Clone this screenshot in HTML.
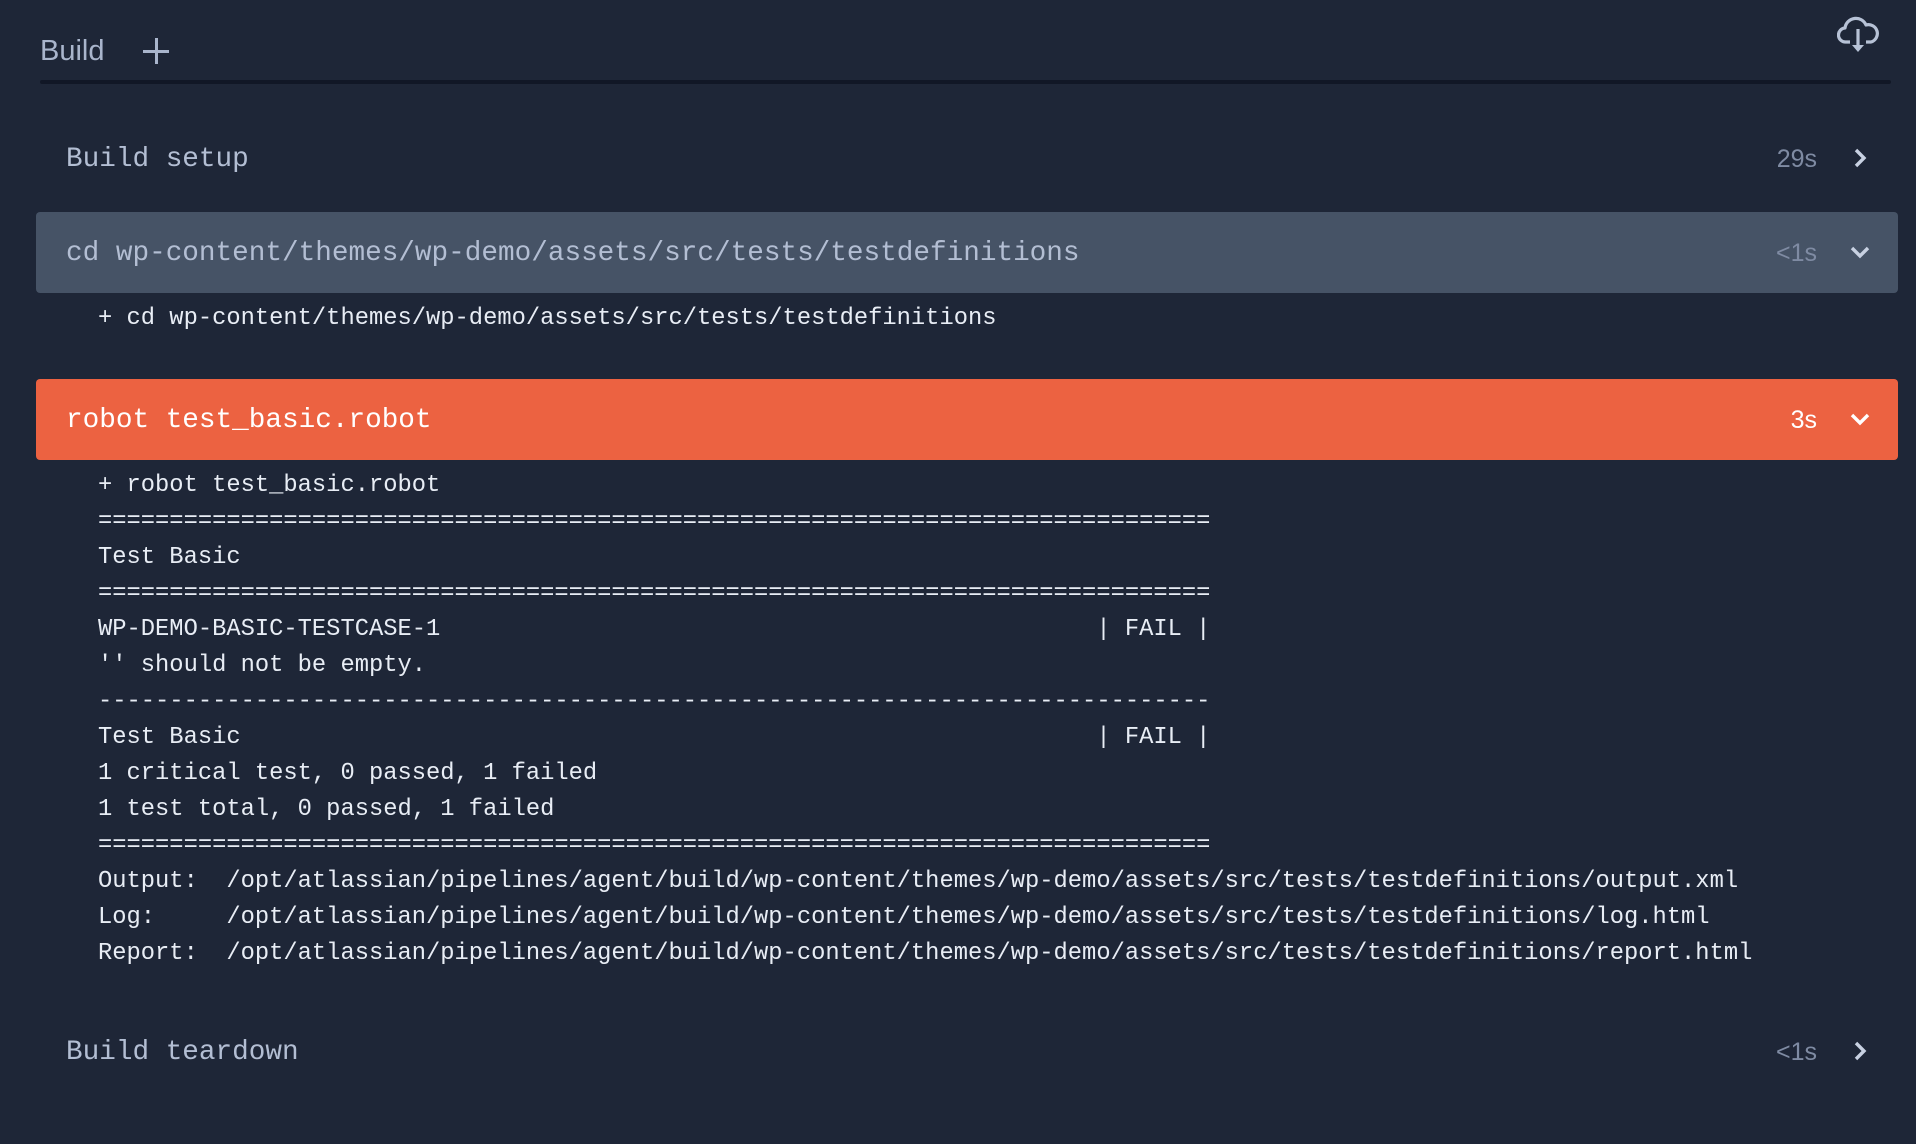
<!DOCTYPE html>
<html><head><meta charset="utf-8"><style>
*{margin:0;padding:0;box-sizing:border-box}
html,body{width:1916px;height:1144px;background:#1e2637;overflow:hidden}
body{position:relative;font-family:"Liberation Mono",monospace}
.tab{position:absolute;left:40px;top:35px;font-family:"Liberation Sans",sans-serif;font-size:29px;color:#a9b5cc}
.plus{position:absolute;left:143px;top:38px;width:26px;height:26px}
.plus:before,.plus:after{content:"";position:absolute;background:#a9b5cc}
.plus:before{left:12px;top:0;width:3px;height:26px}
.plus:after{left:0;top:12px;width:26px;height:3px}
.uline{position:absolute;left:40px;top:80px;width:1851px;height:4px;background:#111726;border-radius:2px}
.row{position:absolute;left:36px;width:1862px;height:81px;border-radius:4px}
.row .t{position:absolute;left:30px;top:1px;line-height:81px;font-size:27.7px;white-space:pre}
.row .d{position:absolute;right:81px;top:1px;line-height:81px;font-family:"Liberation Sans",sans-serif;font-size:25px}
.row svg{position:absolute;right:27px;top:29px}
.log{position:absolute;left:98px;font-size:23.77px;line-height:36px;color:#e8edf5;white-space:pre}
</style></head><body>
<div class="tab">Build</div>
<div class="plus"></div>
<svg style="position:absolute;left:1837px;top:14px" width="42" height="40" viewBox="0 0 42 40"><path d="M13 28H9a7 7 0 0 1-1-14 11 11 0 0 1 21-3 8 8 0 0 1 5 17h-5" fill="none" stroke="#b7c2d6" stroke-width="3.2" stroke-linejoin="round"/><path d="M21 15v20" stroke="#b7c2d6" stroke-width="3.2"/><path d="M15 31l6 7 6-7z" fill="#b7c2d6"/></svg>
<div class="uline"></div>

<div class="row" style="top:118px"><div class="t" style="color:#b3bed3">Build setup</div><div class="d" style="color:#7f8ba3">29s</div><svg width="22" height="22" viewBox="0 0 22 22"><path d="M7 3l8 8-8 8" fill="none" stroke="#c8d1e2" stroke-width="3.4"/></svg></div>

<div class="row" style="top:212px;background:#465366"><div class="t" style="color:#b3bed3">cd wp-content/themes/wp-demo/assets/src/tests/testdefinitions</div><div class="d" style="color:#7f8ba3">&lt;1s</div><svg width="22" height="22" viewBox="0 0 22 22"><path d="M3 7l8 8 8-8" fill="none" stroke="#c8d1e2" stroke-width="3.4"/></svg></div>
<div class="log" style="top:301px">+ cd wp-content/themes/wp-demo/assets/src/tests/testdefinitions</div>

<div class="row" style="top:379px;background:#ec6241"><div class="t" style="color:#fff">robot test_basic.robot</div><div class="d" style="color:#fff">3s</div><svg width="22" height="22" viewBox="0 0 22 22"><path d="M3 7l8 8 8-8" fill="none" stroke="#fff" stroke-width="3.4"/></svg></div>
<div class="log" style="top:468px">+ robot test_basic.robot
==============================================================================
Test Basic
==============================================================================
WP-DEMO-BASIC-TESTCASE-1                                              | FAIL |
'' should not be empty.
------------------------------------------------------------------------------
Test Basic                                                            | FAIL |
1 critical test, 0 passed, 1 failed
1 test total, 0 passed, 1 failed
==============================================================================
Output:  /opt/atlassian/pipelines/agent/build/wp-content/themes/wp-demo/assets/src/tests/testdefinitions/output.xml
Log:     /opt/atlassian/pipelines/agent/build/wp-content/themes/wp-demo/assets/src/tests/testdefinitions/log.html
Report:  /opt/atlassian/pipelines/agent/build/wp-content/themes/wp-demo/assets/src/tests/testdefinitions/report.html</div>

<div class="row" style="top:1011px"><div class="t" style="color:#b3bed3">Build teardown</div><div class="d" style="color:#7f8ba3">&lt;1s</div><svg width="22" height="22" viewBox="0 0 22 22"><path d="M7 3l8 8-8 8" fill="none" stroke="#c8d1e2" stroke-width="3.4"/></svg></div>
</body></html>
